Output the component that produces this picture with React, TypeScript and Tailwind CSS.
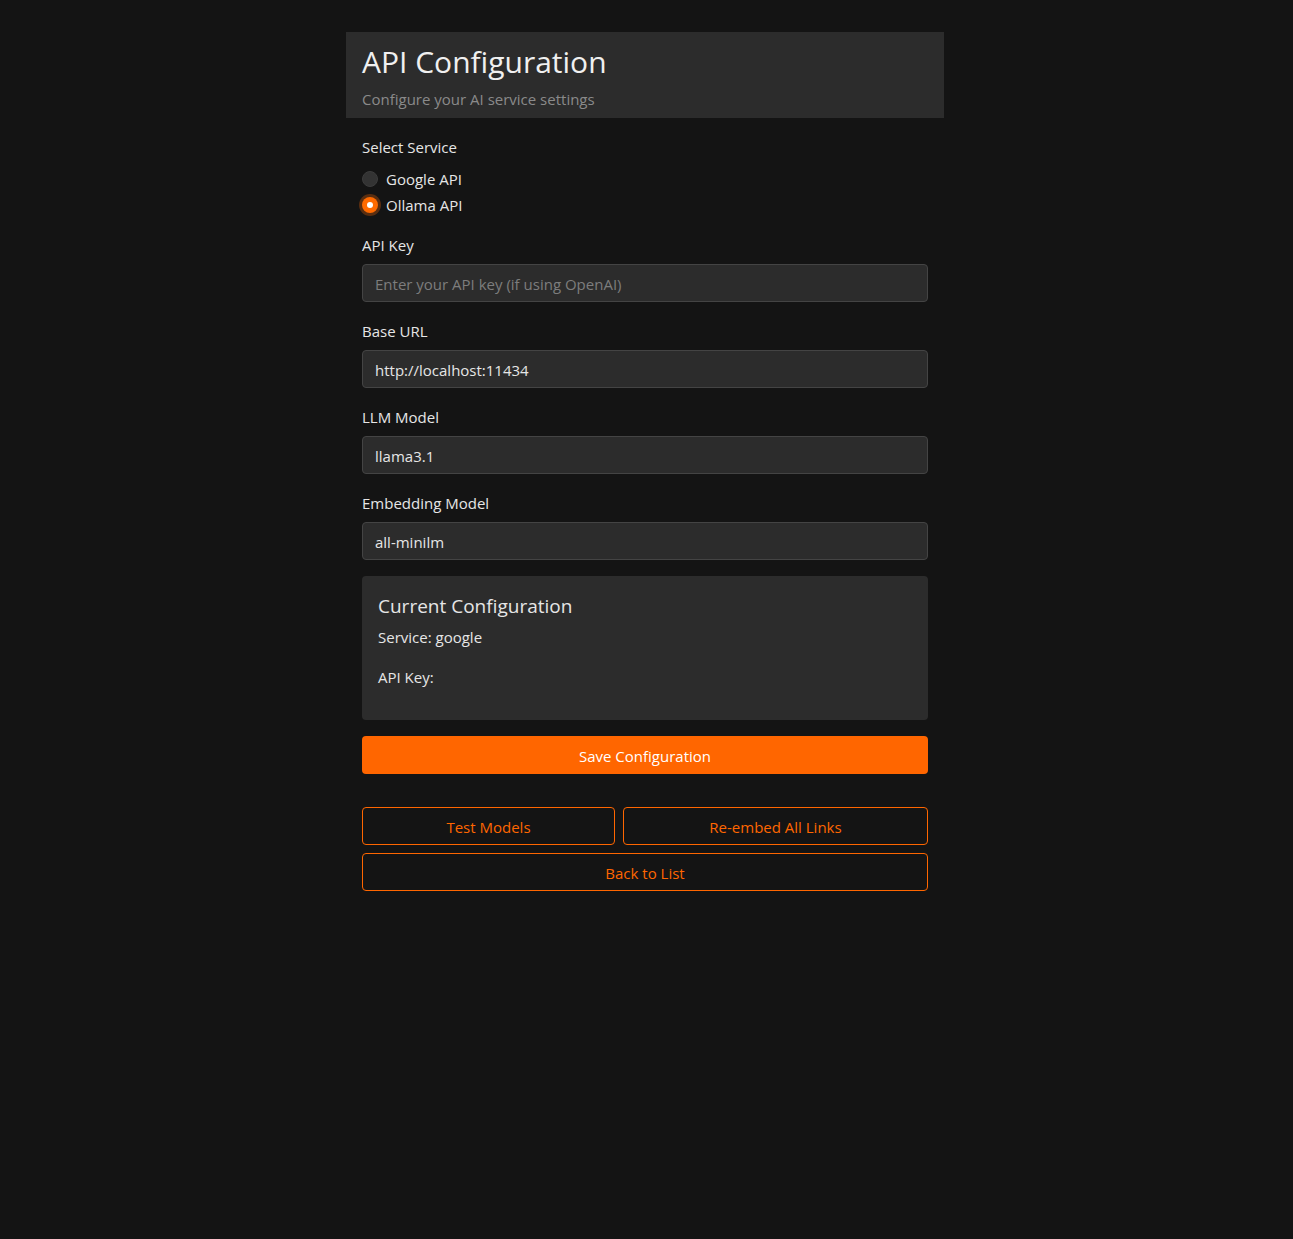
import { useState } from 'react';

const fields = [
  { id: 'base', label: 'Base URL', value: 'http://localhost:11434' },
  { id: 'llm', label: 'LLM Model', value: 'llama3.1' },
  { id: 'embed', label: 'Embedding Model', value: 'all-minilm' },
];

const inputClass =
  'w-full h-[38px] px-3 pt-[2px] bg-[#2c2c2c] border border-[#444] rounded text-[15px] text-[#e6e6e6] placeholder:text-[#7d7d7d] outline-none';

const outlineBtn = 'h-[38px] pt-[2px] border border-[#ff6600] rounded text-[15px] text-[#ff6600]';

export default function App() {
  const [service, setService] = useState('ollama');

  return (
    <div className="min-h-[1239px] bg-[#141414] text-[#e6e6e6] font-['Open_Sans',sans-serif] flex justify-center pr-[3px]">
      <div className="w-[598px] pt-8">
        {/* Header */}
        <div className="bg-[#2c2c2c] px-4 pt-[10px] h-[86px]">
          <h1 className="text-[30px] leading-[40px] text-[#f0f0f0]">API Configuration</h1>
          <p className="text-[15px] leading-5 mt-[7px] text-[#8a8a8a]">Configure your AI service settings</p>
        </div>

        <div className="px-4 pt-[19px]">
          {/* Service */}
          <p className="text-[15px] leading-5 mb-[12px]">Select Service</p>
          <div className="flex flex-col gap-[6px]">
            {[
              { id: 'google', label: 'Google API' },
              { id: 'ollama', label: 'Ollama API' },
            ].map((s) => (
              <label key={s.id} className="flex items-center gap-2 h-5 text-[15px] cursor-pointer">
                <span
                  className={`w-4 h-4 rounded-full flex items-center justify-center ${
                    s.id === service
                      ? 'bg-[#ff6a00] ring-[3px] ring-[#5a2e10]'
                      : 'bg-[#333] border border-[#3c3c3c]'
                  }`}
                  onClick={() => setService(s.id)}
                >
                  {s.id === service && <span className="w-[6px] h-[6px] rounded-full bg-white" />}
                </span>
                {s.label}
              </label>
            ))}
          </div>

          {/* API key */}
          <div className="mt-[20px]">
            <p className="text-[15px] leading-5 mb-[9px]">API Key</p>
            <input className={inputClass} placeholder="Enter your API key (if using OpenAI)" />
          </div>

          {fields.map((f) => (
            <div key={f.id} className="mt-[19px]">
              <p className="text-[15px] leading-5 mb-[9px]">{f.label}</p>
              <input className={inputClass} defaultValue={f.value} />
            </div>
          ))}

          {/* Current config */}
          <div className="mt-4 bg-[#2c2c2c] rounded p-4 h-[144px]">
            <h2 className="text-[19px] leading-7">Current Configuration</h2>
            <p className="text-[15px] leading-5 mt-[7px]">Service: google</p>
            <p className="text-[15px] leading-5 mt-5">API Key:</p>
          </div>

          <button className="mt-4 w-full h-[38px] pt-[2px] bg-[#ff6600] rounded text-[15px] text-white">
            Save Configuration
          </button>

          <div className="mt-[33px] flex gap-2">
            <button className={`w-[253px] ${outlineBtn}`}>Test Models</button>
            <button className={`flex-1 ${outlineBtn}`}>Re-embed All Links</button>
          </div>
          <button className={`mt-2 w-full ${outlineBtn}`}>Back to List</button>
        </div>
      </div>
    </div>
  );
}
